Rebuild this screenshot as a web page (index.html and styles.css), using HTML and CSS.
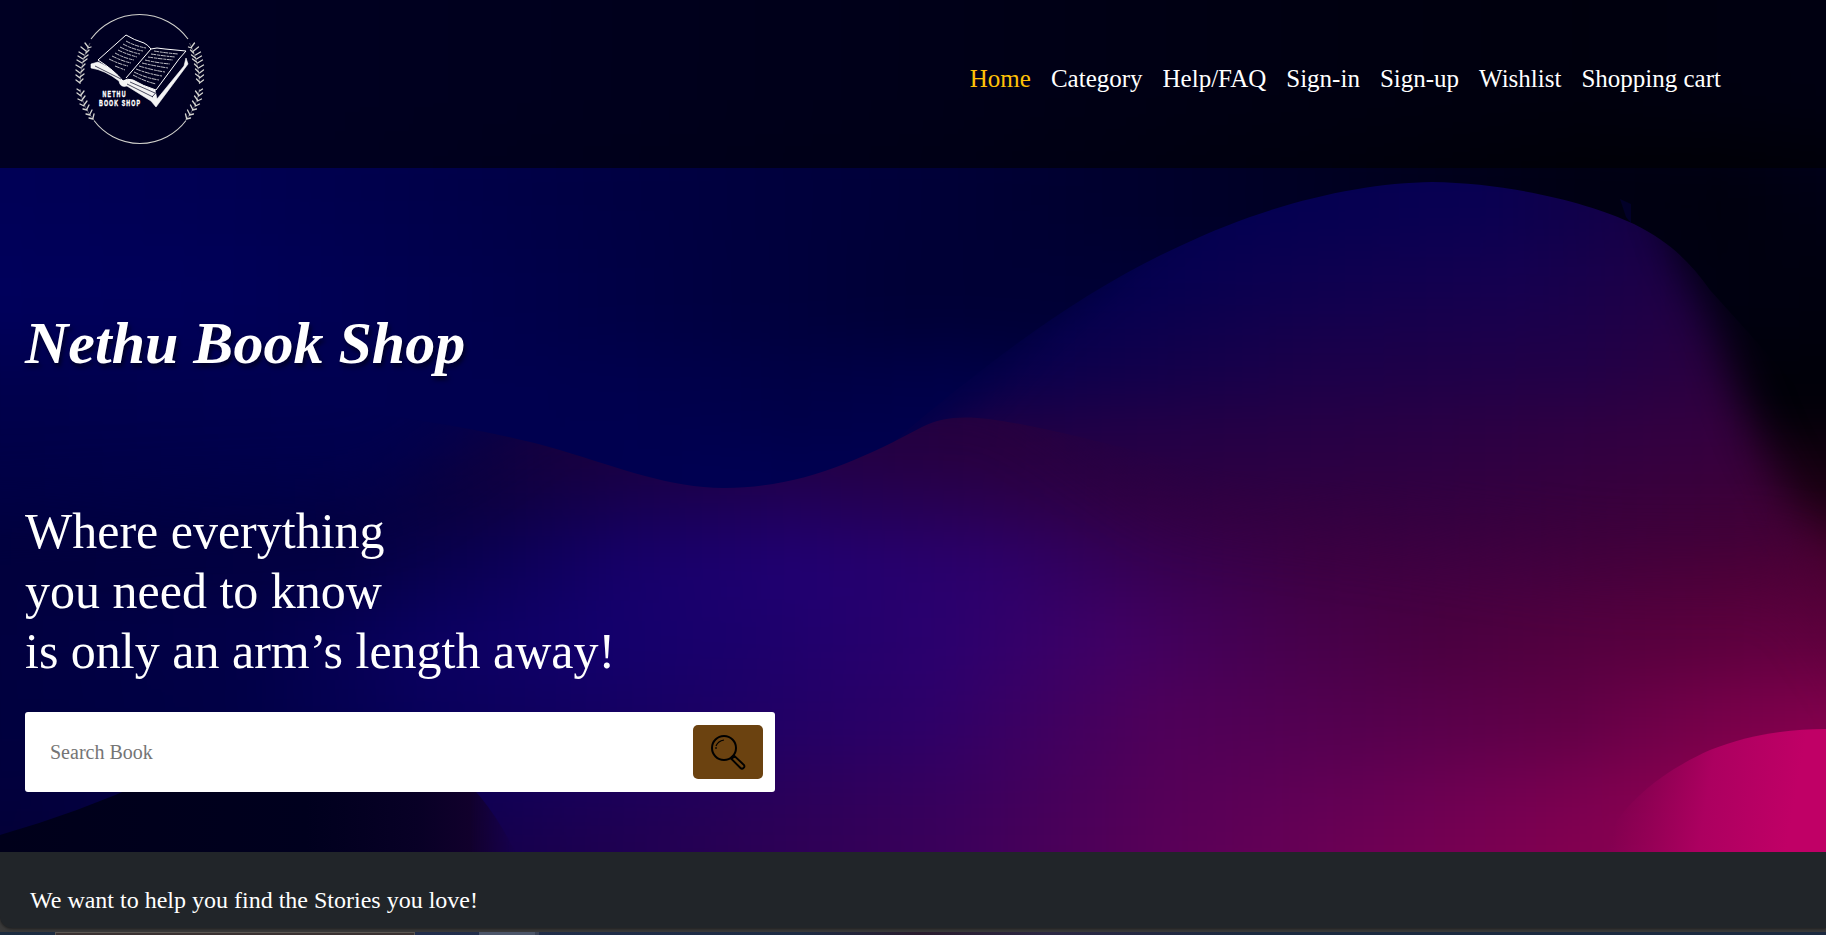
FILE: index.html
```html
<!DOCTYPE html>
<html lang="en">
<head>
<meta charset="utf-8">
<title>Nethu Book Shop</title>
<link rel="stylesheet" href="styles.css">
</head>
<body>
<div class="hero">
<svg class="backdrop" viewBox="0 0 1826 852" preserveAspectRatio="none" aria-hidden="true">
<defs>
<filter id="melt" filterUnits="userSpaceOnUse" x="-200" y="-200" width="2226" height="1300" color-interpolation-filters="sRGB"><feGaussianBlur stdDeviation="14 30"/></filter>
<filter id="soft" filterUnits="userSpaceOnUse" x="-200" y="-200" width="2226" height="1300"><feGaussianBlur stdDeviation="22"/></filter>
<filter id="softer" filterUnits="userSpaceOnUse" x="-200" y="-200" width="2226" height="1300"><feGaussianBlur stdDeviation="36"/></filter>
<linearGradient id="a0"><stop offset="0" stop-color="#000058"/><stop offset=".16" stop-color="#000054"/><stop offset=".33" stop-color="#00004a"/><stop offset=".5" stop-color="#00003e"/><stop offset=".66" stop-color="#00002e"/><stop offset=".83" stop-color="#000022"/><stop offset="1" stop-color="#000030"/></linearGradient>
<linearGradient id="a1"><stop offset="0" stop-color="#000058"/><stop offset=".16" stop-color="#000052"/><stop offset=".33" stop-color="#000044"/><stop offset=".5" stop-color="#000038"/><stop offset=".66" stop-color="#000026"/><stop offset=".83" stop-color="#000012"/><stop offset=".9" stop-color="#00000e"/><stop offset="1" stop-color="#00001a"/></linearGradient>
<linearGradient id="a2"><stop offset="0" stop-color="#00005c"/><stop offset=".16" stop-color="#000058"/><stop offset=".33" stop-color="#000048"/><stop offset=".5" stop-color="#000036"/><stop offset=".6" stop-color="#000034"/><stop offset=".9" stop-color="#000010"/><stop offset="1" stop-color="#00000c"/></linearGradient>
<linearGradient id="a3"><stop offset="0" stop-color="#00004a"/><stop offset=".2" stop-color="#000050"/><stop offset=".36" stop-color="#00004e"/><stop offset=".44" stop-color="#000046"/><stop offset=".52" stop-color="#00004a"/><stop offset=".9" stop-color="#000008"/><stop offset="1" stop-color="#000008"/></linearGradient>
<linearGradient id="a4"><stop offset="0" stop-color="#000044"/><stop offset=".4" stop-color="#000052"/><stop offset=".52" stop-color="#000050"/><stop offset=".9" stop-color="#180014"/><stop offset="1" stop-color="#180010"/></linearGradient>
<linearGradient id="a5"><stop offset="0" stop-color="#000040"/><stop offset=".5" stop-color="#000050"/><stop offset=".9" stop-color="#48002e"/><stop offset="1" stop-color="#48002c"/></linearGradient>
<linearGradient id="b1"><stop offset="0" stop-color="#000050"/><stop offset=".62" stop-color="#000050"/><stop offset=".78" stop-color="#080052"/><stop offset=".9" stop-color="#18003f"/><stop offset="1" stop-color="#18003a"/></linearGradient>
<linearGradient id="b2"><stop offset="0" stop-color="#000050"/><stop offset=".58" stop-color="#000050"/><stop offset=".68" stop-color="#0c0050"/><stop offset=".8" stop-color="#150050"/><stop offset=".92" stop-color="#220040"/><stop offset="1" stop-color="#220038"/></linearGradient>
<linearGradient id="b3"><stop offset="0" stop-color="#00004e"/><stop offset=".52" stop-color="#00004e"/><stop offset=".6" stop-color="#0e004c"/><stop offset=".7" stop-color="#1a004a"/><stop offset=".83" stop-color="#200048"/><stop offset=".94" stop-color="#2e003a"/><stop offset="1" stop-color="#2e0032"/></linearGradient>
<linearGradient id="b4"><stop offset="0" stop-color="#180044"/><stop offset=".5" stop-color="#1c0044"/><stop offset=".6" stop-color="#230046"/><stop offset=".75" stop-color="#2a0044"/><stop offset=".88" stop-color="#340040"/><stop offset="1" stop-color="#3a0034"/></linearGradient>
<linearGradient id="b5"><stop offset="0" stop-color="#2e0040"/><stop offset=".6" stop-color="#300041"/><stop offset=".76" stop-color="#350040"/><stop offset=".88" stop-color="#3d003a"/><stop offset="1" stop-color="#440030"/></linearGradient>
<linearGradient id="b6"><stop offset="0" stop-color="#3a0040"/><stop offset=".74" stop-color="#3e0040"/><stop offset=".88" stop-color="#4a003c"/><stop offset="1" stop-color="#540034"/></linearGradient>
<linearGradient id="c1"><stop offset="0" stop-color="#000044"/><stop offset=".2" stop-color="#020046"/><stop offset=".26" stop-color="#0c0040"/><stop offset=".33" stop-color="#18003e"/><stop offset=".45" stop-color="#220042"/><stop offset=".55" stop-color="#28003e"/><stop offset=".65" stop-color="#260046"/><stop offset=".88" stop-color="#340040"/><stop offset="1" stop-color="#3a0034"/></linearGradient>
<linearGradient id="c2"><stop offset="0" stop-color="#00003e"/><stop offset=".18" stop-color="#000040"/><stop offset=".28" stop-color="#0a003e"/><stop offset=".36" stop-color="#160050"/><stop offset=".44" stop-color="#200058"/><stop offset=".52" stop-color="#280050"/><stop offset=".6" stop-color="#300042"/><stop offset=".76" stop-color="#350040"/><stop offset=".88" stop-color="#3d003a"/><stop offset="1" stop-color="#440030"/></linearGradient>
<linearGradient id="c3"><stop offset="0" stop-color="#00003a"/><stop offset=".22" stop-color="#020042"/><stop offset=".3" stop-color="#0c0058"/><stop offset=".36" stop-color="#16006a"/><stop offset=".44" stop-color="#200072"/><stop offset=".54" stop-color="#2c006a"/><stop offset=".62" stop-color="#360052"/><stop offset=".7" stop-color="#3c0042"/><stop offset=".8" stop-color="#420040"/><stop offset=".9" stop-color="#4c0038"/><stop offset="1" stop-color="#540034"/></linearGradient>
<linearGradient id="c4"><stop offset="0" stop-color="#00003c"/><stop offset=".18" stop-color="#02004a"/><stop offset=".26" stop-color="#0a0060"/><stop offset=".34" stop-color="#12006c"/><stop offset=".42" stop-color="#1c006c"/><stop offset=".52" stop-color="#2c006e"/><stop offset=".6" stop-color="#400064"/><stop offset=".68" stop-color="#46004e"/><stop offset=".76" stop-color="#4a0040"/><stop offset=".88" stop-color="#5a003e"/><stop offset="1" stop-color="#680040"/></linearGradient>
<linearGradient id="c5"><stop offset="0" stop-color="#00003c"/><stop offset=".16" stop-color="#000044"/><stop offset=".26" stop-color="#08005a"/><stop offset=".38" stop-color="#180064"/><stop offset=".51" stop-color="#2e0068"/><stop offset=".62" stop-color="#4e005a"/><stop offset=".72" stop-color="#54004e"/><stop offset=".82" stop-color="#600046"/><stop offset=".9" stop-color="#78004a"/><stop offset="1" stop-color="#8a004e"/></linearGradient>
<linearGradient id="c6"><stop offset="0" stop-color="#000038"/><stop offset=".26" stop-color="#0a0050"/><stop offset=".33" stop-color="#180058"/><stop offset=".44" stop-color="#2a005a"/><stop offset=".52" stop-color="#38005e"/><stop offset=".62" stop-color="#540058"/><stop offset=".72" stop-color="#640054"/><stop offset=".82" stop-color="#780050"/><stop offset=".9" stop-color="#8e004e"/><stop offset="1" stop-color="#980050"/></linearGradient>
<linearGradient id="c7"><stop offset="0" stop-color="#000030"/><stop offset=".26" stop-color="#100048"/><stop offset=".36" stop-color="#200050"/><stop offset=".52" stop-color="#3c005a"/><stop offset=".62" stop-color="#580058"/><stop offset=".72" stop-color="#6e0054"/><stop offset=".82" stop-color="#820050"/><stop offset="1" stop-color="#a00054"/></linearGradient>
<linearGradient id="night" gradientUnits="userSpaceOnUse" x1="0" y1="0" x2="510" y2="0"><stop offset="0" stop-color="#00001a"/><stop offset=".6" stop-color="#00001e"/><stop offset=".82" stop-color="#080026"/><stop offset="1" stop-color="#180030"/></linearGradient>
<linearGradient id="fadeNight" gradientUnits="userSpaceOnUse" x1="470" y1="0" x2="515" y2="0"><stop offset="0" stop-color="#fff"/><stop offset="1" stop-color="#fff" stop-opacity="0"/></linearGradient>
<linearGradient id="rose" gradientUnits="userSpaceOnUse" x1="1618" y1="800" x2="1790" y2="830"><stop offset="0" stop-color="#a0005a" stop-opacity="0"/><stop offset=".5" stop-color="#ac0060"/><stop offset="1" stop-color="#c00066"/></linearGradient>
<clipPath id="hill"><path d="M850 480C940 400 1060 300 1180 246C1270 203 1360 183 1432 182C1510 183 1590 203 1634 224C1670 242 1690 262 1710 290L1900 500V852H850Z"/></clipPath>
<clipPath id="wave"><path d="M0 400C200 390 420 410 560 450C620 468 670 488 724 488C800 488 860 460 922 427C950 412 985 417 1030 426C1100 440 1200 470 1300 480H1826V852H0Z"/></clipPath>
<mask id="hillMask" maskUnits="userSpaceOnUse" x="0" y="0" width="1826" height="852"><path d="M890 480L1020 345L1140 240L1280 100H1630L1676 250L1715 330L1762 450L1835 580L1900 700V1000H800Z" fill="#fff" filter="url(#soft)"/></mask>
<mask id="waveMask" maskUnits="userSpaceOnUse" x="0" y="0" width="1826" height="852"><path d="M-100 520L380 500L560 380H1000L1180 500L1600 560L1800 560L1900 700V1000H-100Z" fill="#fff" filter="url(#softer)"/></mask>
<mask id="nightMask" maskUnits="userSpaceOnUse" x="0" y="700" width="600" height="152"><path d="M0 700H600V852H0Z" fill="url(#fadeNight)"/></mask>
</defs>
<g filter="url(#melt)">
<path fill="url(#a0)" d="M-100-100H1926V140H-100Z"/><path fill="url(#a1)" d="M-100 140H1926V240H-100Z"/><path fill="url(#a2)" d="M-100 240H1926V350H-100Z"/><path fill="url(#a3)" d="M-100 350H1926V440H-100Z"/><path fill="url(#a4)" d="M-100 440H1926V530H-100Z"/><path fill="url(#a5)" d="M-100 530H1926V1000H-100Z"/>
</g>
<path d="M1620 199L1631 204V223L1626 217Z" fill="#020028"/>
<g clip-path="url(#hill)"><g mask="url(#hillMask)"><g filter="url(#melt)">
<path fill="url(#b1)" d="M-100 0H1926V240H-100Z"/><path fill="url(#b2)" d="M-100 240H1926V320H-100Z"/><path fill="url(#b3)" d="M-100 320H1926V400H-100Z"/><path fill="url(#b4)" d="M-100 400H1926V480H-100Z"/><path fill="url(#b5)" d="M-100 480H1926V560H-100Z"/><path fill="url(#b6)" d="M-100 560H1926V1000H-100Z"/>
</g></g></g>
<g clip-path="url(#wave)"><g mask="url(#waveMask)"><g filter="url(#melt)">
<path fill="url(#c1)" d="M-100 300H1926V475H-100Z"/><path fill="url(#c2)" d="M-100 475H1926V530H-100Z"/><path fill="url(#c3)" d="M-100 530H1926V600H-100Z"/><path fill="url(#c4)" d="M-100 600H1926V680H-100Z"/><path fill="url(#c5)" d="M-100 680H1926V760H-100Z"/><path fill="url(#c6)" d="M-100 760H1926V825H-100Z"/><path fill="url(#c7)" d="M-100 825H1926V1000H-100Z"/>
</g></g></g>
<path d="M0 835Q80 812 150 780Q300 720 440 760Q485 790 515 852H0Z" fill="url(#night)" mask="url(#nightMask)"/>
<path d="M1600 852C1620 800 1670 768 1710 750C1750 734 1790 729 1826 729V852Z" fill="url(#rose)"/>
</svg>
<header class="topbar">
<svg class="logo" viewBox="0 0 160 168" role="img" aria-label="Nethu Book Shop logo">
<path d="M31 39A60.300 60.300 0 0 1 128 39M34 120.500A57.500 57.500 0 0 0 126 120.500" fill="none" stroke="#d0d0cc" stroke-width="1.100"/>
<g id="sprig" fill="none" stroke="#d4d4d0" stroke-width=".8">
<path d="M30 43Q21 60 20 84M20 89Q23 108 34 120" stroke-width=".4"/>
<path d="M28 47l-3-4M26 51l-5-4M24 55l-5-3M23 59l-5-3M22 63l-5-3M21 68l-5-3M20 73l-4-3M20 78l-4-3M20 83l-4-3M28 48l3-1M26 53l3-3M24 58l4-3M23 62l4-3M22 67l3-3M21 72l3-3M20 77l4-3M20 82l3-3M20 91l-3-2M21 96l-4-3M22 101l-4-2M24 106l-4-2M27 110l-4-1M30 115l-4-1M33 119l-4-1M21 95l3-4M22 100l3-4M24 105l3-4M27 109l2-4M30 114l2-4M33 118l1-4" stroke-width="1.300" stroke-linecap="round"/>
</g>
<use href="#sprig" transform="matrix(-1 0 0 1 159.500 0)"/>
<g stroke="#fff" stroke-linejoin="round">
<path d="M31 64L38 62L95 90L97 99L124 66L126 58L128 64L96 107L91 101L67 86Q60 88 59 81Q45 70 31 68Z" fill="#f4f4f4" stroke-width=".6"/>
<path d="M38 60L66 35Q74 40 84 43Q88 45 91 49Q96 47 105 49L126 51L119 59L96 90Q83 86 73 80Q67 78 63 81Q54 70 38 60Z" fill="#000020" stroke-width="1"/>
<path d="M91 49L66 78" fill="none" stroke-width="1"/>
<path d="M35 66L61 79M67 84L93 97M70 82L95 93M92 97L124 62" fill="none" stroke="#000020" stroke-width=".7"/>
</g>
<g fill="none" stroke="#c8c8cc" stroke-width=".95" stroke-dasharray="5 .8 3 .6">
<path d="M66 41Q75 46 86 48M63 44Q72 49 83 51M60 47Q70 52 80 54M58 50Q66 54 77 57M55 53Q64 58 74 60M52 56Q62 61 71 63M49 59Q59 64 68 66M55 66L65 70"/>
<path d="M94 51Q106 53 118 54M91 54Q104 56 115 57M88 57Q101 59 113 60M85 60Q98 63 110 64M82 63Q95 66 108 68M79 66Q92 70 105 72M76 69Q89 74 102 76M74 72Q86 78 99 80M73 75Q84 81 96 84"/>
</g>
<g class="logo-text"><text transform="translate(42.500 97) scale(.62 1)" textLength="37" lengthAdjust="spacing">NETHU</text><text transform="translate(39 106) scale(.62 1)" textLength="66" lengthAdjust="spacing">BOOK SHOP</text></g>
</svg>
<nav class="menu"><a class="active">Home</a><a>Category</a><a>Help/FAQ</a><a>Sign-in</a><a>Sign-up</a><a>Wishlist</a><a>Shopping cart</a></nav>
</header>
<main class="intro">
<h1>Nethu Book Shop</h1>
<p class="tagline">Where everything<br>you need to know<br>is only an arm’s length away!</p>
<form class="search"><input type="text" placeholder="Search Book" aria-label="Search Book"><button type="button" aria-label="Search">
<svg viewBox="0 0 36 36" fill="none" stroke="#000"><circle cx="14" cy="14" r="12" stroke-width="2"/><path d="M6 12Q8 7 14 6M6 13V15" stroke-width="1.200"/><path d="M21.500 25L24.500 22L34 31Q35 33 33.500 34Q32 35.500 30.500 34Z" stroke-width="1.900"/><path d="M23 22L21 24" stroke-width="2"/></svg>
</button></form>
</main>
</div>
<section class="welcome"><div class="welcome-bar"><p>We want to help you find the Stories you love!</p></div></section>
<div class="gallery"><span class="shelf"></span><span class="page"></span></div>
</body>
</html>
```

FILE: styles.css
```css
* { box-sizing: border-box; }
html { height: 100%; overflow: hidden; }
body { margin: 0; height: 935px; overflow: hidden; font-family: "Liberation Serif", "Times New Roman", serif; color: #fff; background: #3a3a3a; }
.hero { position: relative; height: 852px; overflow: hidden; background: #000040; isolation: isolate; }
.backdrop { position: absolute; inset: 0; width: 100%; height: 100%; z-index: -1; }
.topbar { height: 168px; display: flex; justify-content: space-between; align-items: center; padding: 0 105px 0 60px; background: rgba(0, 0, 0, .6); }
.logo { width: 160px; height: 168px; }
.logo-text { font: bold 8.5px "Liberation Sans", sans-serif; fill: #fff; stroke: #fff; stroke-width: .4px; }
.menu { display: flex; gap: 20px; font-size: 25px; line-height: 36px; padding-bottom: 10px; }
.menu .active { color: #ffc107; }
.intro { padding: 139px 25px 0; }
h1 { margin: 0; font-size: 60px; font-style: italic; font-weight: bold; line-height: 72px; text-shadow: 2px 4px 4px rgba(0, 0, 0, .5); }
.tagline { margin: 122px 0 0; font-size: 50px; line-height: 60px; }
.search { margin-top: 31px; display: flex; align-items: center; width: 750px; height: 80px; padding: 0 12px 0 25px; border-radius: 3px; background: #fff; }
.search input { flex: 1; height: 60px; border: 0; outline: 0; padding: 0; font: 20px "Liberation Serif", "Times New Roman", serif; background: transparent; }
.search input::placeholder { color: #757575; opacity: 1; }
.search button { width: 70px; height: 54px; border: 0; border-radius: 5px; padding: 0; display: grid; place-items: center; background: #6b4210; }
.search button svg { width: 36px; height: 36px; }
.welcome { height: 80px; background: #3a3a3a; }
.welcome-bar { height: 76px; padding: 30px 30px 0; border-bottom-left-radius: 12px; background: #212529; box-shadow: 0 1px 3px rgba(0, 0, 0, .5); }
.welcome p { margin: 0; font-size: 24px; line-height: 36px; }
.gallery { height: 3px; display: flex; padding-left: 55px; gap: 64px; background: linear-gradient(90deg, #1c2c40, #222e4c 420px, #1e2c44 800px, #2a1c2e 920px, #2c2844 1050px, #1c2a40 1250px, #1c2a40); }
.shelf { width: 360px; border: 1px solid #5a5652; border-bottom: 0; background: #3a3232; }
.page { width: 60px; background: #4c566a; border-right: 4px solid #3a4256; }
```
